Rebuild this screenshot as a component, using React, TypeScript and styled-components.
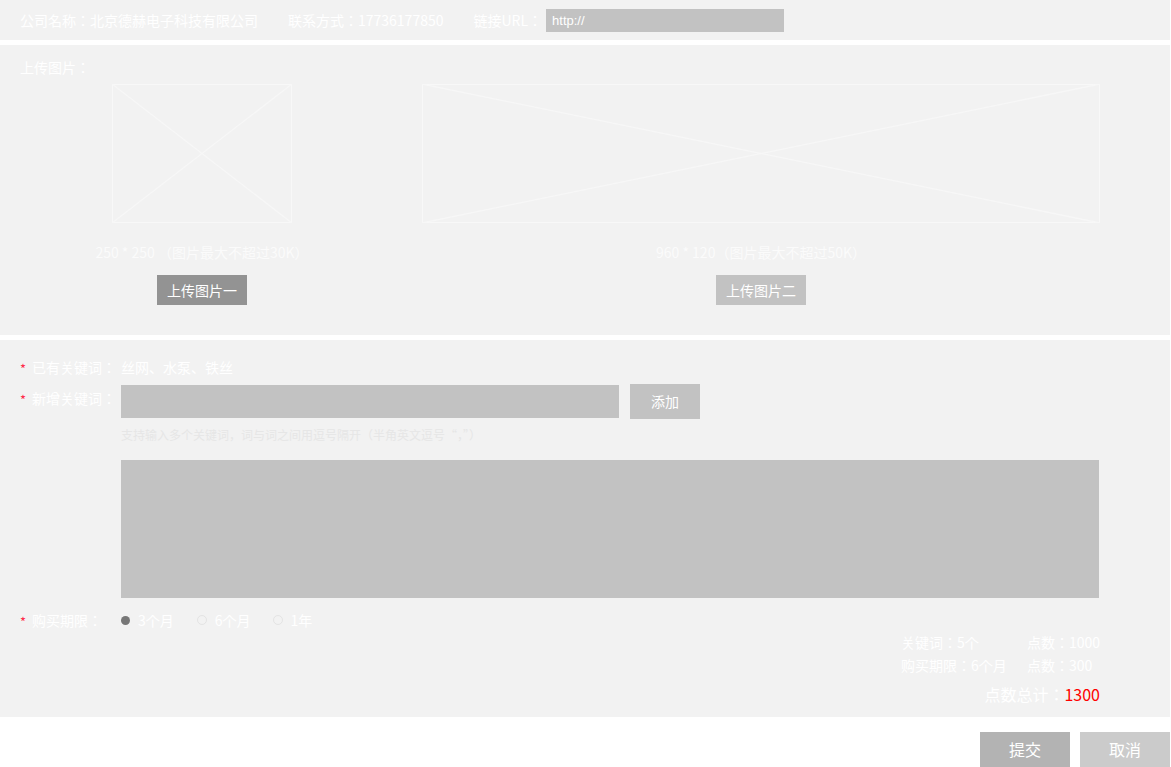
import React from "react";
import styled, { createGlobalStyle } from "styled-components";

const GlobalStyle = createGlobalStyle`
  html, body {
    margin: 0;
    padding: 0;
    background: #ffffff;
    overflow: hidden;
  }
  body {
    font-family: "Noto Sans CJK JP", "Noto Sans CJK SC", "Noto Sans", sans-serif;
    color: #ffffff;
  }
  * { box-sizing: border-box; }
`;

const Page = styled.div`
  width: 1170px;
  display: flex;
  flex-direction: column;
  gap: 5px;
`;

const Panel = styled.section<{ $pt?: number; $pb?: number }>`
  background: #f2f2f2;
  padding-top: ${(p) => p.$pt ?? 0}px;
  padding-bottom: ${(p) => p.$pb ?? 0}px;
  display: flex;
  flex-direction: column;
`;

const TopBar = styled.div`
  height: 40px;
  padding-left: 20px;
  display: flex;
  align-items: center;
  gap: 30px;
  font-size: 14px;
  line-height: 20px;
  white-space: nowrap;
`;

const Group = styled.div`
  display: flex;
  align-items: center;
  gap: 4px;
`;

const UrlInput = styled.input`
  width: 238px;
  height: 23px;
  border: none;
  outline: none;
  background: #c2c2c2;
  color: #ffffff;
  padding: 0 0 0 6px;
  font-family: "Liberation Sans", "Noto Sans", sans-serif;
  font-size: 13px;
`;

const SectionTitle = styled.div`
  padding-left: 20px;
  font-size: 14px;
  line-height: 20px;
`;

const Uploads = styled.div`
  display: flex;
  padding-left: 112px;
  gap: 130px;
  margin-top: 7px;
`;

const UploadCol = styled.div<{ $w: number }>`
  width: ${(p) => p.$w}px;
  display: flex;
  flex-direction: column;
  align-items: center;
`;

const Placeholder = styled.svg`
  display: block;
  width: 100%;
  height: 139px;
`;

const Caption = styled.div`
  margin-top: 19px;
  font-size: 14px;
  line-height: 20px;
  color: #fbfbfb;
  white-space: nowrap;
`;

const GrayButton = styled.button<{ $bg: string; $w: number; $h: number; $fs: number }>`
  width: ${(p) => p.$w}px;
  height: ${(p) => p.$h}px;
  background: ${(p) => p.$bg};
  border: none;
  padding: 0;
  color: #ffffff;
  font-family: "Noto Sans CJK JP", "Noto Sans CJK SC", "Noto Sans", sans-serif;
  font-size: ${(p) => p.$fs}px;
  line-height: ${(p) => p.$h}px;
  cursor: pointer;
  flex: none;
`;

const UploadButton = styled(GrayButton)`
  margin-top: 13px;
`;

const Row = styled.div<{ $mt?: number }>`
  display: flex;
  align-items: flex-start;
  padding-left: 20px;
  margin-top: ${(p) => p.$mt ?? 0}px;
  font-size: 14px;
  line-height: 20px;
`;

const Star = styled.span<{ $mt?: number }>`
  width: 12px;
  height: 20px;
  flex: none;
  color: #ff2a4a;
  font-size: 13px;
  line-height: 18px;
  padding-top: 3px;
  margin-top: ${(p) => p.$mt ?? 0}px;
`;

const Label = styled.span<{ $mt?: number }>`
  width: 89px;
  flex: none;
  white-space: nowrap;
  margin-top: ${(p) => p.$mt ?? 0}px;
`;

const Value = styled.span`
  white-space: nowrap;
`;

const KeywordInput = styled.input`
  width: 498px;
  height: 33px;
  margin-top: 1px;
  margin-right: 11px;
  border: none;
  outline: none;
  background: #c2c2c2;
  color: #ffffff;
  padding: 0 8px;
`;

const Indented = styled.div<{ $mt: number }>`
  padding-left: 121px;
  margin-top: ${(p) => p.$mt}px;
`;

const Hint = styled.div`
  font-family: "Noto Sans CJK SC", "Noto Sans", sans-serif;
  font-size: 12px;
  line-height: 16px;
  color: #e6e6e6;
  white-space: nowrap;
`;

const TextArea = styled.textarea`
  display: block;
  width: 978px;
  height: 138px;
  border: none;
  outline: none;
  resize: none;
  background: #c2c2c2;
  padding: 0;
  margin: 0;
`;

const Radios = styled.div`
  display: flex;
  align-items: center;
  height: 20px;
`;

const RadioItem = styled.label<{ $mr: number }>`
  display: flex;
  align-items: center;
  gap: 8px;
  margin-right: ${(p) => p.$mr}px;
  white-space: nowrap;
`;

const Dot = styled.span<{ $on?: boolean }>`
  width: ${(p) => (p.$on ? 9 : 10)}px;
  height: ${(p) => (p.$on ? 9 : 10)}px;
  border-radius: 50%;
  background: ${(p) => (p.$on ? "#777777" : "transparent")};
  border: ${(p) => (p.$on ? "none" : "1px solid #e4e4e4")};
  flex: none;
`;

const Summary = styled.div`
  align-self: flex-end;
  margin-right: 70px;
  margin-top: 1px;
  display: grid;
  grid-template-columns: 126px auto;
  font-size: 14px;
  line-height: 23px;
  white-space: nowrap;
`;

const Total = styled.div`
  align-self: flex-end;
  margin-right: 70px;
  margin-top: 5px;
  font-size: 16px;
  line-height: 24px;
  white-space: nowrap;
`;

const Red = styled.span`
  color: #ff0000;
`;

const Footer = styled.div`
  display: flex;
  justify-content: flex-end;
  gap: 10px;
  padding-top: 10px;
`;

const PlaceholderImage: React.FC = () => (
  <Placeholder viewBox="0 0 100 100" preserveAspectRatio="none">
    <rect x="0" y="0" width="100" height="100" fill="none" stroke="#f8f8f8" strokeWidth="2" vectorEffect="non-scaling-stroke" />
    <line x1="0" y1="0" x2="100" y2="100" stroke="#f7f7f7" strokeWidth="1.3" vectorEffect="non-scaling-stroke" />
    <line x1="100" y1="0" x2="0" y2="100" stroke="#f7f7f7" strokeWidth="1.3" vectorEffect="non-scaling-stroke" />
  </Placeholder>
);

export default function App() {
  return (
    <>
      <GlobalStyle />
      <Page>
        <Panel>
          <TopBar>
            <span>公司名称：北京德赫电子科技有限公司</span>
            <span>联系方式：17736177850</span>
            <Group>
              <span>链接URL：</span>
              <UrlInput readOnly value="http://" />
            </Group>
          </TopBar>
        </Panel>

        <Panel $pt={12} $pb={30}>
          <SectionTitle>上传图片：</SectionTitle>
          <Uploads>
            <UploadCol $w={180}>
              <PlaceholderImage />
              <Caption>250 * 250 （图片最大不超过30K）</Caption>
              <UploadButton $bg="#939393" $w={90} $h={30} $fs={14}>上传图片一</UploadButton>
            </UploadCol>
            <UploadCol $w={678}>
              <PlaceholderImage />
              <Caption>960 * 120（图片最大不超过50K）</Caption>
              <UploadButton $bg="#c2c2c2" $w={90} $h={30} $fs={14}>上传图片二</UploadButton>
            </UploadCol>
          </Uploads>
        </Panel>

        <Panel $pt={17} $pb={11}>
          <Row>
            <Star>*</Star>
            <Label>已有关键词：</Label>
            <Value>丝网、水泵、铁丝</Value>
          </Row>
          <Row $mt={7}>
            <Star $mt={4}>*</Star>
            <Label $mt={4}>新增关键词：</Label>
            <KeywordInput />
            <GrayButton $bg="#c2c2c2" $w={70} $h={35} $fs={14}>添加</GrayButton>
          </Row>
          <Indented $mt={8}>
            <Hint>支持输入多个关键词，词与词之间用逗号隔开（半角英文逗号“，”）</Hint>
          </Indented>
          <Indented $mt={17}>
            <TextArea />
          </Indented>
          <Row $mt={12}>
            <Star>*</Star>
            <Label>购买期限：</Label>
            <Radios>
              <RadioItem $mr={23}>
                <Dot $on />
                3个月
              </RadioItem>
              <RadioItem $mr={22}>
                <Dot />
                6个月
              </RadioItem>
              <RadioItem $mr={0}>
                <Dot />
                1年
              </RadioItem>
            </Radios>
          </Row>
          <Summary>
            <span>关键词：5个</span>
            <span>点数：1000</span>
            <span>购买期限：6个月</span>
            <span>点数：300</span>
          </Summary>
          <Total>
            点数总计：<Red>1300</Red>
          </Total>
        </Panel>

        <Footer>
          <GrayButton $bg="#b3b3b3" $w={90} $h={35} $fs={16}>提交</GrayButton>
          <GrayButton $bg="#cbcbcb" $w={90} $h={35} $fs={16}>取消</GrayButton>
        </Footer>
      </Page>
    </>
  );
}
